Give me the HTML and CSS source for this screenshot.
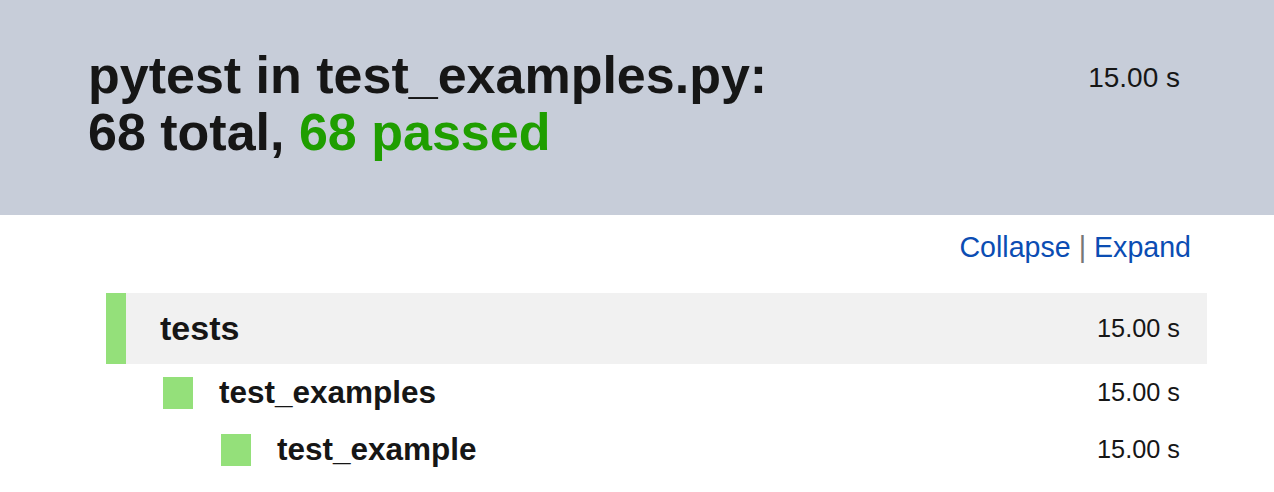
FILE: index.html
```html
<!DOCTYPE html>
<html>
<head>
<meta charset="utf-8">
<link rel="stylesheet" href="styles.css">
</head>
<body>
<header class="summary">
  <h1 class="title">pytest in test_examples.py:<br>68 total, <span class="passed">68 passed</span></h1>
  <div class="total-time">15.00 s</div>
</header>
<div class="controls"><a class="link">Collapse</a> <span class="sep">|</span> <a class="link">Expand</a></div>
<div class="tree">
  <div class="row row-top">
    <span class="name name-top">tests</span>
    <span class="time">15.00 s</span>
  </div>
  <div class="row row-child level-1">
    <span class="marker"></span>
    <span class="name">test_examples</span>
    <span class="time">15.00 s</span>
  </div>
  <div class="row row-child level-2">
    <span class="marker"></span>
    <span class="name">test_example</span>
    <span class="time">15.00 s</span>
  </div>
</div>
</body>
</html>
```
FILE: styles.css
```css
html, body {
  margin: 0;
  padding: 0;
  background: #ffffff;
  color: #161616;
  font-family: "Liberation Sans", Arial, sans-serif;
}
.summary {
  height: 215px;
  box-sizing: border-box;
  background: #c7cdd9;
  display: flex;
  justify-content: space-between;
  align-items: flex-start;
  padding: 47px 94px 0 88px;
}
.title {
  margin: 0;
  font-size: 52px;
  line-height: 57px;
  font-weight: bold;
  color: #161616;
}
.passed {
  color: #1f9e00;
}
.total-time {
  font-size: 28px;
  line-height: 32px;
  margin-top: 15px;
}
.controls {
  text-align: right;
  padding: 15px 83px 0 0;
  height: 63px;
  box-sizing: border-box;
  font-size: 28.6px;
  line-height: 34px;
}
.link {
  color: #0b4db3;
  text-decoration: none;
}
.sep {
  color: #777777;
}
.tree {
  margin: 15px 67px 0 106px;
}
.row {
  display: flex;
  align-items: center;
}
.row-top {
  height: 71px;
  background: #f1f1f1;
  border-left: 20px solid #94e07a;
  padding: 0 27px 0 34px;
}
.name {
  font-weight: bold;
  font-size: 31.5px;
  flex: 1;
}
.name-top {
  font-size: 34px;
}
.time {
  font-size: 25.3px;
}
.row-child {
  height: 57px;
  padding-right: 27px;
}
.level-1 {
  padding-left: 57px;
}
.level-2 {
  padding-left: 115px;
}
.marker {
  width: 30px;
  height: 32px;
  background: #94e07a;
  margin-right: 26px;
  flex: none;
}
```
